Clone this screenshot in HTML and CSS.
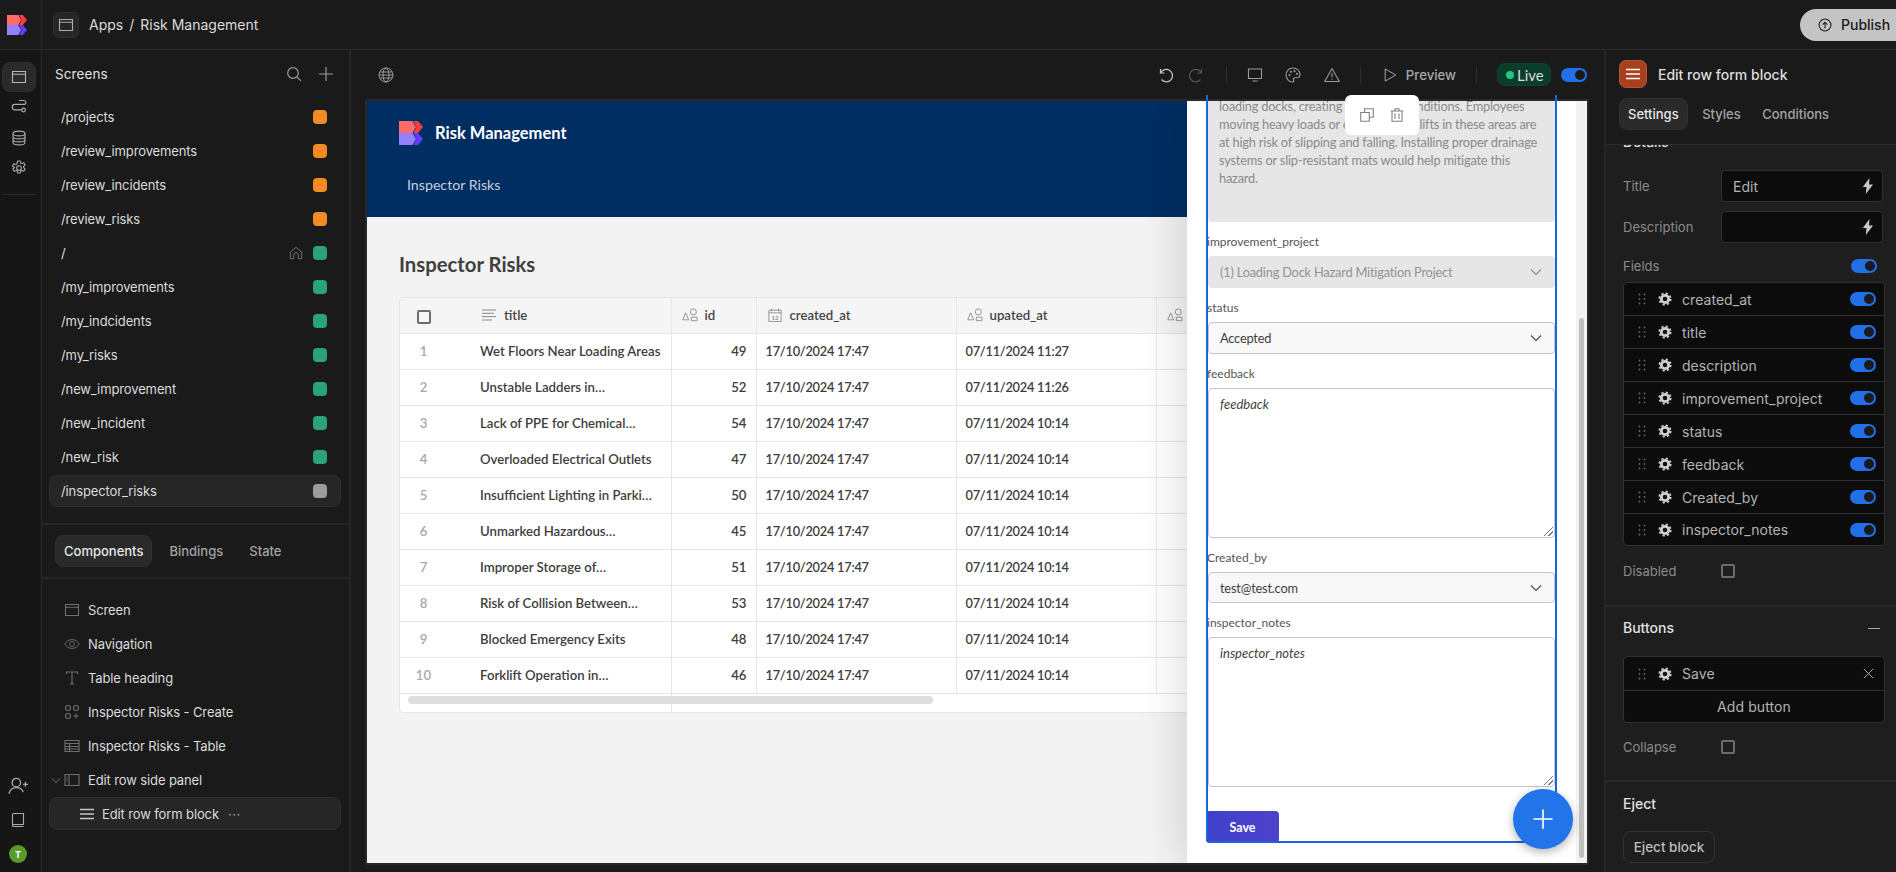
FILE: index.html
```html
<!DOCTYPE html>
<html lang="en">
<head>
<meta charset="utf-8">
<title>Risk Management - Budibase</title>
<link rel="stylesheet" href="styles.css">
</head>
<body>
<svg class="defs" width="0" height="0" aria-hidden="true">
  <defs>
    <symbol id="i-logo" viewBox="0 0 24 24">
      <path fill="#ff6b6b" d="M0 0H13.5L17 6 13.5 12H0Z"/>
      <path fill="#fb3f3f" d="M14.5 0H19L24 6 19 12H14.5L17.5 6Z"/>
      <path fill="#9380ff" d="M0 12H13.5L17 18 13.5 24H0Z"/>
      <path fill="#5f3dff" d="M14.5 12H19L24 18 19 24H14.5L17.5 18Z"/>
    </symbol>
    <symbol id="i-screen" viewBox="0 0 16 16"><path fill="none" stroke="currentColor" stroke-width="1.1" d="M1.5 2.5h13v11h-13zM1.5 5.3h13"/></symbol>
    <symbol id="i-flow" viewBox="0 0 16 16"><path fill="none" stroke="currentColor" stroke-width="1.2" stroke-linecap="round" d="M8.5 1.5H13a1.9 1.9 0 0 1 0 3.8H4a2.6 2.6 0 0 0 0 5.6h6.6"/><circle cx="12.6" cy="11" r="1.8" fill="none" stroke="currentColor" stroke-width="1.2"/></symbol>
    <symbol id="i-db" viewBox="0 0 16 16"><g fill="none" stroke="currentColor" stroke-width="1.1"><ellipse cx="8" cy="3.5" rx="6" ry="2.4"/><path d="M2 3.5v9c0 1.3 2.7 2.4 6 2.4s6-1.1 6-2.4v-9M2 6.5c0 1.3 2.7 2.4 6 2.4s6-1.1 6-2.4M2 9.5c0 1.3 2.7 2.4 6 2.4s6-1.1 6-2.4"/></g></symbol>
    <symbol id="i-cog" viewBox="0 0 16 16"><g fill="none" stroke="currentColor" stroke-width="1.1" stroke-linejoin="round"><circle cx="8" cy="8" r="2.3"/><path d="M6.7 1h2.6l.4 2 1.2.6 1.9-.8 1.3 2.2-1.5 1.3v1.4l1.5 1.3-1.3 2.2-1.9-.8-1.2.6-.4 2H6.700l-.4-2-1.200-.6-1.900.8-1.300-2.200 1.500-1.300V7.300L1.400 6l1.300-2.200 1.900.8 1.200-.6z"/></g></symbol>
    <symbol id="i-search" viewBox="0 0 16 16"><g fill="none" stroke="currentColor" stroke-width="1.2"><circle cx="7" cy="7" r="5.300"/><path d="M11 11l3.800 3.800"/></g></symbol>
    <symbol id="i-plus" viewBox="0 0 16 16"><path fill="none" stroke="currentColor" stroke-width="1.2" d="M8 1v14M1 8h14"/></symbol>
    <symbol id="i-home" viewBox="0 0 16 16"><path fill="none" stroke="currentColor" stroke-width="1.1" stroke-linejoin="round" d="M1.500 7L8 1.500 14.500 7v7.500h-4V10a2.500 2.500 0 0 0-5 0v4.500h-4z"/></symbol>
    <symbol id="i-user" viewBox="0 0 18 16"><g fill="none" stroke="currentColor" stroke-width="1.2" stroke-linecap="round"><circle cx="7.500" cy="5" r="3.800"/><path d="M1 14.500c.8-3 3.300-5 6.500-5s5.200 1.500 6 3.500M14 6.500h3.500M15.700 4.800v3.500"/></g></symbol>
    <symbol id="i-book" viewBox="0 0 16 16"><path fill="none" stroke="currentColor" stroke-width="1.1" d="M2.500 12.500V2.500a1 1 0 0 1 1-1h10v11h-10a1 1 0 0 0-1 1 1 1 0 0 0 1 1h10"/></symbol>
    <symbol id="i-eye" viewBox="0 0 18 12"><g fill="none" stroke="currentColor" stroke-width="1"><path d="M.8 6C3 2.700 5.800 1 9 1s6 1.700 8.200 5C15 9.300 12.200 11 9 11S3 9.300.800 6z"/><circle cx="9" cy="6" r="2.800"/></g></symbol>
    <symbol id="i-text" viewBox="0 0 16 16"><path fill="none" stroke="currentColor" stroke-width="1.1" d="M2.500 4V2h11v2M8 2v12M6 14h4"/></symbol>
    <symbol id="i-form" viewBox="0 0 16 16"><g fill="none" stroke="currentColor" stroke-width="1.100"><circle cx="4" cy="4" r="2.500"/><circle cx="12" cy="4" r="2.500"/><circle cx="4" cy="12" r="2.500"/><path d="M12 9.500v5M9.500 12h5"/></g></symbol>
    <symbol id="i-table" viewBox="0 0 16 16"><path fill="none" stroke="currentColor" stroke-width="1.100" d="M1 2.500h14v11H1zM1 5.500h14M1 8.500h14M1 11h14M5.500 5.500v8"/></symbol>
    <symbol id="i-side" viewBox="0 0 16 16"><path fill="none" stroke="currentColor" stroke-width="1.100" d="M1 2.500h14v11H1zM5 2.500v11M2.500 5h1M2.500 7h1M2.500 9h1"/></symbol>
    <symbol id="i-menu" viewBox="0 0 14 12"><path fill="none" stroke="currentColor" stroke-width="1.300" d="M0 1.500h14M0 6h14M0 10.500h14"/></symbol>
    <symbol id="i-chev" viewBox="0 0 12 8"><path fill="none" stroke="currentColor" stroke-width="1.100" d="M1 1.500l5 5 5-5"/></symbol>
    <symbol id="i-globe" viewBox="0 0 16 16"><g fill="none" stroke="currentColor" stroke-width="1"><circle cx="8" cy="8" r="7"/><ellipse cx="8" cy="8" rx="3" ry="7"/><path d="M1 8h14M1.800 5h12.400M1.800 11h12.400"/></g></symbol>
    <symbol id="i-undo" viewBox="0 0 16 16"><path fill="none" stroke="currentColor" stroke-width="1.200" d="M2.500 2v4h4M2.700 6A6.200 6.200 0 1 1 3.500 12.500"/></symbol>
    <symbol id="i-redo" viewBox="0 0 16 16"><path fill="none" stroke="currentColor" stroke-width="1.200" d="M13.500 2v4h-4M13.300 6A6.200 6.200 0 1 0 12.500 12.500"/></symbol>
    <symbol id="i-desktop" viewBox="0 0 16 16"><path fill="none" stroke="currentColor" stroke-width="1.100" d="M1.500 2h13v9.500h-13zM5.500 14h5"/></symbol>
    <symbol id="i-palette" viewBox="0 0 16 16"><g fill="none" stroke="currentColor" stroke-width="1.100"><path d="M8 1C3.800 1 1 4.200 1 8s3 7 6.300 7c1.300 0 1.800-1 1.300-2-.6-1.200.1-2.300 1.500-2.300h2.200C14 10.700 15 9.200 15 7.500 15 3.800 12 1 8 1z"/></g><g fill="currentColor"><circle cx="4.500" cy="8" r="1.100"/><circle cx="6" cy="4.800" r="1.100"/><circle cx="9.500" cy="4.200" r="1.100"/><circle cx="12" cy="6.800" r="1.100"/></g></symbol>
    <symbol id="i-warn" viewBox="0 0 16 16"><path fill="none" stroke="currentColor" stroke-width="1.100" stroke-linejoin="round" d="M8 1.500L15.300 14.500H.7zM8 6v4.500M8 11.700v1"/></symbol>
    <symbol id="i-play" viewBox="0 0 16 16"><path fill="none" stroke="currentColor" stroke-width="1.100" stroke-linejoin="round" d="M2.500 1v14L14.500 8z"/></symbol>
    <symbol id="i-upload" viewBox="0 0 16 16"><g fill="none" stroke="currentColor" stroke-width="1.200"><circle cx="8" cy="8" r="6.800"/><path d="M8 12V5M5.300 7.500L8 4.800l2.700 2.700"/></g></symbol>
    <symbol id="i-bolt" viewBox="0 0 12 16"><path fill="currentColor" d="M7.500 0L.800 9h3.700L3.800 16 11 6.500H7z"/></symbol>
    <symbol id="i-gear" viewBox="0 0 16 16"><g fill="none" stroke="currentColor"><circle cx="8" cy="8" r="4.200" stroke-width="3.200"/><circle cx="8" cy="8" r="6.500" stroke-width="2" stroke-dasharray="2.550 2.555"/></g></symbol>
    <symbol id="i-drag" viewBox="0 0 8 12"><g fill="currentColor"><circle cx="1.500" cy="1.500" r=".9"/><circle cx="6.500" cy="1.500" r=".9"/><circle cx="1.500" cy="6" r=".9"/><circle cx="6.500" cy="6" r=".9"/><circle cx="1.500" cy="10.500" r=".9"/><circle cx="6.500" cy="10.500" r=".9"/></g></symbol>
    <symbol id="i-close" viewBox="0 0 12 12"><path fill="none" stroke="currentColor" stroke-width="1" d="M1 1l10 10M11 1L1 11"/></symbol>
    <symbol id="i-copy" viewBox="0 0 14 14"><path fill="none" stroke="currentColor" stroke-width="1.100" d="M.7 4.500h8.600v8.800H.7zM4.500 4.500V.7h8.800v8.600H9.300"/></symbol>
    <symbol id="i-trash" viewBox="0 0 14 14"><path fill="none" stroke="currentColor" stroke-width="1.100" d="M2 3v10.300h10V3M.7 3h12.600M5 3V.8h4V3M5 5.500v5.500M9 5.500v5.500"/></symbol>
    <symbol id="i-lines" viewBox="0 0 16 12"><path fill="none" stroke="currentColor" stroke-width="1" d="M1 1h14M1 4.300h12M1 7.600h14M1 11h10"/></symbol>
    <symbol id="i-shapes" viewBox="0 0 18 16"><g fill="none" stroke="currentColor" stroke-width="1"><path d="M4 5.500L7.500 13.500H.7zM10.500 10.500h6.500v4h-6.500z"/><circle cx="12.800" cy="4.500" r="3.500"/></g></symbol>
    <symbol id="i-cal" viewBox="0 0 16 16"><g fill="none" stroke="currentColor" stroke-width="1"><path d="M1 2.500h14v13H1zM1 5.500h14M4 .7v3M12 .7v3"/></g><text x="8" y="13.300" font-size="7" text-anchor="middle" fill="currentColor">12</text></symbol>
  </defs>
</svg>

<div class="app">
  <header class="topbar">
    <div class="brand-cell"><svg class="logo"><use href="#i-logo"/></svg></div>
    <div class="crumbs">
      <span class="crumb-icon"><svg class="ic-15"><use href="#i-screen"/></svg></span>
      <span class="crumb-text">Apps</span><span class="crumb-text crumb-sep">/</span><span class="crumb-text">Risk Management</span>
    </div>
    <button class="publish"><svg class="ic-14"><use href="#i-upload"/></svg>Publish</button>
  </header>

  <div class="workspace">
    <nav class="rail">
      <div class="rail-top">
        <span class="rail-btn active"><svg class="ic-15"><use href="#i-screen"/></svg></span>
        <span class="rail-btn"><svg class="ic-15"><use href="#i-flow"/></svg></span>
        <span class="rail-btn"><svg class="ic-15"><use href="#i-db"/></svg></span>
        <span class="rail-btn"><svg class="ic-15"><use href="#i-cog"/></svg></span>
        <span class="rail-rule"></span>
      </div>
      <div class="rail-bottom">
        <span class="rail-btn"><svg class="ic-18"><use href="#i-user"/></svg></span>
        <span class="rail-btn"><svg class="ic-15"><use href="#i-book"/></svg></span>
        <span class="avatar">T</span>
      </div>
    </nav>

    <aside class="left">
      <section class="screens">
        <div class="screens-head">
          <span class="screens-title">Screens</span>
          <span class="head-icons"><svg class="ic-15"><use href="#i-search"/></svg><svg class="ic-15"><use href="#i-plus"/></svg></span>
        </div>
        <ul class="screen-list">
          <li class="screen-row"><span class="grow">/projects</span><i class="dot orange"></i></li>
          <li class="screen-row"><span class="grow">/review_improvements</span><i class="dot orange"></i></li>
          <li class="screen-row"><span class="grow">/review_incidents</span><i class="dot orange"></i></li>
          <li class="screen-row"><span class="grow">/review_risks</span><i class="dot orange"></i></li>
          <li class="screen-row"><span class="grow">/</span><svg class="ic-14 home"><use href="#i-home"/></svg><i class="dot green"></i></li>
          <li class="screen-row"><span class="grow">/my_improvements</span><i class="dot green"></i></li>
          <li class="screen-row"><span class="grow">/my_indcidents</span><i class="dot green"></i></li>
          <li class="screen-row"><span class="grow">/my_risks</span><i class="dot green"></i></li>
          <li class="screen-row"><span class="grow">/new_improvement</span><i class="dot green"></i></li>
          <li class="screen-row"><span class="grow">/new_incident</span><i class="dot green"></i></li>
          <li class="screen-row"><span class="grow">/new_risk</span><i class="dot green"></i></li>
          <li class="screen-row selected"><span class="grow">/inspector_risks</span><i class="dot grey"></i></li>
        </ul>
      </section>
      <div class="left-tabs">
        <span class="tab active">Components</span><span class="tab">Bindings</span><span class="tab">State</span>
      </div>
      <ul class="tree">
        <li class="tree-row"><svg class="tree-ic"><use href="#i-screen"/></svg>Screen</li>
        <li class="tree-row"><svg class="tree-ic"><use href="#i-eye"/></svg>Navigation</li>
        <li class="tree-row"><svg class="tree-ic"><use href="#i-text"/></svg>Table heading</li>
        <li class="tree-row"><svg class="tree-ic"><use href="#i-form"/></svg>Inspector Risks - Create</li>
        <li class="tree-row"><svg class="tree-ic"><use href="#i-table"/></svg>Inspector Risks - Table</li>
        <li class="tree-row"><svg class="tree-chev"><use href="#i-chev"/></svg><svg class="tree-ic"><use href="#i-side"/></svg>Edit row side panel</li>
        <li class="tree-row selected nested"><svg class="tree-menu"><use href="#i-menu"/></svg>Edit row form block<span class="more">···</span></li>
      </ul>
    </aside>

    <main class="canvas">
      <div class="canvas-bar">
        <svg class="ic-15 bar-ic"><use href="#i-globe"/></svg>
        <div class="bar-right">
          <svg class="ic-15 bar-ic bright"><use href="#i-undo"/></svg>
          <svg class="ic-15 bar-ic dim"><use href="#i-redo"/></svg>
          <span class="bar-rule after-redo"></span>
          <svg class="ic-15 bar-ic"><use href="#i-desktop"/></svg>
          <svg class="ic-15 bar-ic palette"><use href="#i-palette"/></svg>
          <svg class="ic-15 bar-ic warn"><use href="#i-warn"/></svg>
          <span class="bar-rule"></span>
          <span class="preview-btn"><svg class="ic-14"><use href="#i-play"/></svg>Preview</span>
          <span class="bar-rule"></span>
          <span class="live"><i class="live-dot"></i>Live</span>
          <span class="toggle"></span>
        </div>
      </div>

      <div class="stage">
        <div class="site-head">
          <div class="site-brand"><svg class="site-logo"><use href="#i-logo"/></svg><span class="site-name">Risk Management</span></div>
          <div class="site-nav">Inspector Risks</div>
        </div>
        <div class="site-body">
          <h1 class="site-title">Inspector Risks</h1>
          <div class="grid-wrap">
            <table class="grid">
              <colgroup><col class="c-num"><col class="c-title"><col class="c-id"><col class="c-date"><col class="c-date"><col class="c-date"></colgroup>
              <thead>
                <tr>
                  <th class="num"><i class="check light"></i></th>
                  <th><span class="th"><svg class="th-ic"><use href="#i-lines"/></svg>title</span></th>
                  <th><span class="th"><svg class="th-ic"><use href="#i-shapes"/></svg>id</span></th>
                  <th><span class="th"><svg class="th-ic"><use href="#i-cal"/></svg>created_at</span></th>
                  <th><span class="th"><svg class="th-ic"><use href="#i-shapes"/></svg>upated_at</span></th>
                  <th><span class="th"><svg class="th-ic"><use href="#i-shapes"/></svg></span></th>
                </tr>
              </thead>
              <tbody>
                <tr><td class="num">1</td><td>Wet Floors Near Loading Areas</td><td class="end">49</td><td class="date">17/10/2024 17:47</td><td class="date">07/11/2024 11:27</td><td></td></tr>
                <tr><td class="num">2</td><td>Unstable Ladders in…</td><td class="end">52</td><td class="date">17/10/2024 17:47</td><td class="date">07/11/2024 11:26</td><td></td></tr>
                <tr><td class="num">3</td><td>Lack of PPE for Chemical…</td><td class="end">54</td><td class="date">17/10/2024 17:47</td><td class="date">07/11/2024 10:14</td><td></td></tr>
                <tr><td class="num">4</td><td>Overloaded Electrical Outlets</td><td class="end">47</td><td class="date">17/10/2024 17:47</td><td class="date">07/11/2024 10:14</td><td></td></tr>
                <tr><td class="num">5</td><td>Insufficient Lighting in Parki…</td><td class="end">50</td><td class="date">17/10/2024 17:47</td><td class="date">07/11/2024 10:14</td><td></td></tr>
                <tr><td class="num">6</td><td>Unmarked Hazardous…</td><td class="end">45</td><td class="date">17/10/2024 17:47</td><td class="date">07/11/2024 10:14</td><td></td></tr>
                <tr><td class="num">7</td><td>Improper Storage of…</td><td class="end">51</td><td class="date">17/10/2024 17:47</td><td class="date">07/11/2024 10:14</td><td></td></tr>
                <tr><td class="num">8</td><td>Risk of Collision Between…</td><td class="end">53</td><td class="date">17/10/2024 17:47</td><td class="date">07/11/2024 10:14</td><td></td></tr>
                <tr><td class="num">9</td><td>Blocked Emergency Exits</td><td class="end">48</td><td class="date">17/10/2024 17:47</td><td class="date">07/11/2024 10:14</td><td></td></tr>
                <tr><td class="num">10</td><td>Forklift Operation in…</td><td class="end">46</td><td class="date">17/10/2024 17:47</td><td class="date">07/11/2024 10:14</td><td></td></tr>
                <tr class="filler"><td class="num"></td><td class="line"></td><td></td><td></td><td></td><td></td></tr>
              </tbody>
            </table>
            <span class="h-scroll"></span>
          </div>
        </div>

        <div class="side-panel">
          <form class="edit-form">
            <div class="desc-box">loading docks, creating hazardous conditions. Employees<br>moving heavy loads or operating forklifts in these areas are<br>at high risk of slipping and falling. Installing proper drainage<br>systems or slip-resistant mats would help mitigate this<br>hazard.</div>
            <div class="field"><label>improvement_project</label><div class="select disabled">(1) Loading Dock Hazard Mitigation Project<svg class="sel-chev"><use href="#i-chev"/></svg></div></div>
            <div class="field"><label>status</label><div class="select">Accepted<svg class="sel-chev"><use href="#i-chev"/></svg></div></div>
            <div class="field"><label>feedback</label><div class="area">feedback<i class="grip"></i></div></div>
            <div class="field"><label>Created_by</label><div class="select slim">test@test.com<svg class="sel-chev"><use href="#i-chev"/></svg></div></div>
            <div class="field"><label>inspector_notes</label><div class="area">inspector_notes<i class="grip"></i></div></div>
            <div class="save-row"><span class="save">Save</span></div>
          </form>
          <div class="v-track"><span class="v-thumb"></span></div>
        </div>
      </div>

      <div class="selection"></div>
      <div class="float-tools"><svg class="ic-14"><use href="#i-copy"/></svg><svg class="ic-14"><use href="#i-trash"/></svg></div>
      <button class="fab"><svg class="fab-ic"><use href="#i-plus"/></svg></button>
    </main>

    <aside class="right">
      <div class="right-head">
        <div class="right-title"><span class="block-badge"><svg class="badge-ic"><use href="#i-menu"/></svg></span>Edit row form block</div>
        <div class="right-tabs"><span class="tab active">Settings</span><span class="tab">Styles</span><span class="tab">Conditions</span></div>
      </div>
      <div class="right-scroll">
        <section class="sec details">
          <h2 class="sec-title details-title">Details</h2>
          <div class="prop"><span class="prop-label">Title</span><span class="input">Edit<svg class="bolt"><use href="#i-bolt"/></svg></span></div>
          <div class="prop"><span class="prop-label">Description</span><span class="input"><svg class="bolt"><use href="#i-bolt"/></svg></span></div>
          <div class="fields-head"><span class="prop-label">Fields</span><span class="toggle"></span></div>
          <ul class="item-list">
            <li class="item"><svg class="drag"><use href="#i-drag"/></svg><svg class="gear"><use href="#i-gear"/></svg><span class="grow">created_at</span><span class="toggle"></span></li>
            <li class="item"><svg class="drag"><use href="#i-drag"/></svg><svg class="gear"><use href="#i-gear"/></svg><span class="grow">title</span><span class="toggle"></span></li>
            <li class="item"><svg class="drag"><use href="#i-drag"/></svg><svg class="gear"><use href="#i-gear"/></svg><span class="grow">description</span><span class="toggle"></span></li>
            <li class="item"><svg class="drag"><use href="#i-drag"/></svg><svg class="gear"><use href="#i-gear"/></svg><span class="grow">improvement_project</span><span class="toggle"></span></li>
            <li class="item"><svg class="drag"><use href="#i-drag"/></svg><svg class="gear"><use href="#i-gear"/></svg><span class="grow">status</span><span class="toggle"></span></li>
            <li class="item"><svg class="drag"><use href="#i-drag"/></svg><svg class="gear"><use href="#i-gear"/></svg><span class="grow">feedback</span><span class="toggle"></span></li>
            <li class="item"><svg class="drag"><use href="#i-drag"/></svg><svg class="gear"><use href="#i-gear"/></svg><span class="grow">Created_by</span><span class="toggle"></span></li>
            <li class="item"><svg class="drag"><use href="#i-drag"/></svg><svg class="gear"><use href="#i-gear"/></svg><span class="grow">inspector_notes</span><span class="toggle"></span></li>
          </ul>
          <div class="check-row"><span class="prop-label">Disabled</span><i class="check"></i></div>
        </section>
        <section class="sec buttons">
          <div class="sec-head"><h2 class="sec-title">Buttons</h2><span class="minus"></span></div>
          <ul class="item-list btn-list">
            <li class="item save-item"><svg class="drag"><use href="#i-drag"/></svg><svg class="gear"><use href="#i-gear"/></svg><span class="grow">Save</span><svg class="x"><use href="#i-close"/></svg></li>
            <li class="add-btn">Add button</li>
          </ul>
          <div class="check-row"><span class="prop-label">Collapse</span><i class="check"></i></div>
        </section>
        <section class="sec eject">
          <h2 class="sec-title">Eject</h2>
          <span class="eject-btn">Eject block</span>
        </section>
      </div>
    </aside>
  </div>
</div>
</body>
</html>
```

FILE: styles.css
```css
* { box-sizing: border-box; }
html, body { margin: 0; height: 100%; }
body {
  width: 1896px; height: 872px; overflow: hidden;
  background: #1a1a1a; color: #e0e0e0;
  font-family: Inter, "Liberation Sans", sans-serif; font-size: 14px;
}
ul { list-style: none; margin: 0; padding: 0; }
h1, h2 { margin: 0; font-weight: inherit; font-size: inherit; }
button { font: inherit; border: 0; padding: 0; }
.defs { position: absolute; }
svg { display: block; flex: none; }
.grow { flex: 1; min-width: 0; }
.ic-14 { width: 14px; height: 14px; }
.ic-15 { width: 16px; height: 16px; }
.ic-18 { width: 20px; height: 18px; }

.app { display: flex; flex-direction: column; height: 872px; }

/* top bar */
.topbar { height: 50px; flex: none; display: flex; align-items: center; border-bottom: 1px solid #2a2a2a; }
.brand-cell { width: 42px; height: 100%; display: flex; align-items: center; padding-left: 7px; border-right: 1px solid #2a2a2a; }
.logo { width: 20px; height: 20px; }
.crumbs { display: flex; align-items: center; margin-left: 11px; flex: 1; }
.crumb-icon { width: 26px; height: 26px; display: flex; align-items: center; justify-content: center; background: #262626; border: 1px solid #2e2e2e; border-radius: 6px; color: #aaa; margin-right: 10px; }
.crumb-text { font-size: 14px; color: #dcdcdc; }
.crumb-sep { margin: 0 6px; }
.publish { width: 96px; height: 32px; margin-right: 0; display: flex; align-items: center; gap: 9px; padding-left: 18px; background: #c4c4c4; color: #1a1a1a; border-radius: 16px 0 0 16px; font-weight: 500; font-size: 14px; }

.workspace { flex: 1; display: flex; min-height: 0; }

/* rail */
.rail { width: 42px; flex: none; border-right: 1px solid #2a2a2a; display: flex; flex-direction: column; justify-content: space-between; background: #161616; padding: 12px 0 0; }
.rail-top { display: flex; flex-direction: column; align-items: center; gap: .3px; width: 36px; margin-left: 1px; }
.rail-btn { width: 34px; height: 30px; display: flex; align-items: center; justify-content: center; color: #aaa; }
.rail-btn.active { background: #2a2a2a; border: 1px solid #2f2f2f; border-radius: 8px; color: #b8b8b8; }
.rail-rule { width: 34px; height: 1px; background: #2a2a2a; margin-top: 11px; }
.rail-bottom { display: flex; flex-direction: column; align-items: center; width: 36px; gap: 4px; padding-bottom: 9px; }
.avatar { width: 18px; height: 18px; border-radius: 50%; background: #5b9a2c; color: #fff; font-size: 9px; font-weight: 700; display: flex; align-items: center; justify-content: center; margin-top: 6px; }

/* left panel */
.left { width: 309px; flex: none; border-right: 2px solid #262626; display: flex; flex-direction: column; }
.screens { border-bottom: 2px solid #262626; padding-bottom: 15px; height: 475px; flex: none; }
.screens-head { height: 50px; display: flex; align-items: center; justify-content: space-between; padding: 0 15px 2px 13px; }
.screens-title { font-size: 13.5px; color: #e0e0e0; letter-spacing: .1px; }
.head-icons { display: flex; gap: 16px; color: #9a9a9a; }
.screen-list { padding: 0 8px 0 7px; }
.screen-row { height: 34px; display: flex; align-items: center; padding: 0 14px 0 12px; font-size: 13px; letter-spacing: -.12px; color: #dcdcdc; border-radius: 8px; }
.screen-row.selected { height: 32px; margin-top: 1px; background: #262626; border: 1px solid #2e2e2e; padding: 0 13px 0 11px; }
.dot { width: 14px; height: 14px; border-radius: 4px; display: block; }
.dot.orange { background: #f28c22; }
.dot.green { background: #2ba37a; }
.dot.grey { background: #9b9b9b; }
.home { color: #777; margin-right: 10px; }
.left-tabs { height: 54px; flex: none; display: flex; align-items: center; padding-left: 13px; border-bottom: 2px solid #262626; gap: 1px; }
.tab { height: 32px; display: inline-flex; align-items: center; padding: 0 8px; font-size: 13px; font-weight: 500; color: #a3a3a3; border-radius: 8px; border: 1px solid transparent; margin-right: 7px; }
.tab.active { background: #2a2a2a; border-color: #303030; color: #e6e6e6; }
.tree { padding: 14px 8px 0 7px; }
.tree-row { height: 34px; display: flex; align-items: center; padding-left: 15px; font-size: 13px; letter-spacing: -.12px; color: #dcdcdc; position: relative; }
.tree-ic { width: 16px; height: 16px; color: #707070; margin-right: 8px; }
.tree-chev { position: absolute; left: 2px; top: 14px; width: 10px; height: 7px; color: #777; }
.tree-row.selected { height: 33px; background: #262626; border: 1px solid #2e2e2e; border-radius: 8px; padding-left: 30px; }
.tree-menu { width: 14px; height: 12px; color: #c8c8c8; margin-right: 8px; }
.more { margin-left: 9px; color: #aaa; letter-spacing: .5px; }

/* canvas */
.canvas { flex: 1; min-width: 0; position: relative; display: flex; flex-direction: column; padding: 0 15px 7px 14px; }
.canvas-bar { height: 49px; flex: none; display: flex; align-items: center; justify-content: space-between; padding-left: 13px; }
.bar-ic { color: #999; }
.bar-ic.bright { color: #c4c4c4; }
.bar-ic.dim { color: #555; margin-left: -6px; }
.bar-right { display: flex; align-items: center; gap: 20px; margin-right: 2px; }
.bar-right .palette { margin-left: 2px; }
.bar-right .warn { margin-left: 3px; }
.bar-right .after-redo { margin-left: 2px; }
.bar-rule { width: 1px; height: 18px; background: #2c2c2c; }
.preview-btn { display: flex; align-items: center; gap: 9px; margin-left: 2px; color: #a8a8a8; font-size: 13.2px; font-weight: 500; }
.live { height: 23px; width: 54px; padding-left: 8px; display: flex; align-items: center; gap: 3px; background: #0a3d2b; border: 1px solid #0e4431; border-radius: 8px; color: #dcdcdc; font-family: Lato, sans-serif; font-size: 15px; }
.live-dot { width: 8px; height: 8px; border-radius: 50%; background: #1fc77e; display: block; }
.toggle { width: 26px; height: 14px; flex: none; border-radius: 7px; background: #2270e8; position: relative; display: block; }
.bar-right .toggle { margin-left: -10px; }
.toggle::after { content: ""; position: absolute; right: 2px; top: 2px; width: 10px; height: 10px; border-radius: 50%; background: #1a1a1a; }

.stage { flex: 1; min-height: 0; border: 2px solid #292929; position: relative; overflow: hidden; background: #f3f3f3; color: #3d3d3d; font-family: Lato, "Noto Sans", sans-serif; display: flex; flex-direction: column; }
.site-head { height: 116px; flex: none; background: #002e63; padding: 20px 0 0 32px; }
.site-brand { display: flex; align-items: center; gap: 12px; color: #fff; font-size: 16.5px; font-weight: 700; height: 24px; }
.site-name { margin-top: -1px; }
.site-logo { width: 24px; height: 24px; }
.site-nav { margin: 29px 0 0 8px; color: #c6d0dc; font-size: 14.2px; height: 22px; line-height: 22px; }
.site-body { flex: 1; padding: 0 32px; }
.site-title { font-size: 20.3px; font-weight: 700; color: #404040; height: 80px; line-height: 95px; }
.grid-wrap { position: relative; height: 416px; background: #fff; border: 1px solid #e6e6e6; border-radius: 4px; overflow: hidden; }
.grid { width: 956px; table-layout: fixed; border-collapse: collapse; font-size: 13.2px; font-weight: 600; }
.c-num { width: 71px; }
.c-title { width: 200px; }
.c-id { width: 85px; }
.c-date { width: 200px; }
.grid th { height: 35px; background: #f5f5f5; text-align: left; padding: 0 10px; border-right: 1px solid #e6e6e6; border-bottom: 1px solid #e6e6e6; color: #444; font-weight: 600; }
.grid td { height: 36px; padding: 0 9px; border-right: 1px solid #e6e6e6; border-bottom: 1px solid #e6e6e6; white-space: nowrap; overflow: hidden; color: #3d3d3d; }
.grid .num { text-align: center; padding: 0 24px 0 0; color: #a8a8a8; border-right: 0; }
.grid .end { text-align: right; }
.grid .date { font-size: 12.8px; letter-spacing: -.25px; }
.grid .filler td { height: 21px; border: 0; }
.grid .filler .line { border-right: 1px solid #e6e6e6; }
.th { display: flex; align-items: center; gap: 7px; }
.th-ic { width: 16px; height: 14px; color: #8a8a8a; }
.h-scroll { position: absolute; left: 8px; top: 398px; width: 525px; height: 8px; border-radius: 4px; background: #dedede; }
.check { display: block; width: 14px; height: 14px; border: 2px solid #6c6c6c; border-radius: 2px; }
.check.light { display: inline-block; vertical-align: middle; }

/* side panel */
.side-panel { position: absolute; top: 0; right: 0; bottom: 0; width: 400px; background: #fff; box-shadow: -6px 0 40px rgba(0,0,0,.14); display: flex; flex-direction: column; justify-content: flex-end; overflow: hidden; padding: 0 32px 20px 21px; }
.edit-form { display: flex; flex-direction: column; gap: 12px; flex: none; }
.desc-box { background: #e6e6e6; color: #8a8a8a; font-size: 12.8px; letter-spacing: -.2px; line-height: 18px; padding: 0 11px 35px; height: 125px; border-radius: 4px; white-space: nowrap; }
.field { display: flex; flex-direction: column; gap: 4px; }
.field label { font-size: 12px; line-height: 16px; height: 18px; color: #555; margin-left: -1px; }
.select { height: 32px; display: flex; align-items: center; justify-content: space-between; padding: 0 12px 0 11px; background: #f8f8f8; border: 1px solid #c4c4c4; border-radius: 4px; font-size: 12.8px; letter-spacing: -.2px; color: #3f3f3f; }
.select.slim { height: 31px; }
.select.disabled { background: #e6e6e6; border-color: #e6e6e6; color: #929292; }
.sel-chev { width: 12px; height: 8px; color: #444; }
.disabled .sel-chev { color: #8a8a8a; }
.area { height: 150px; position: relative; border: 1px solid #c4c4c4; border-radius: 4px; padding: 6px 11px; font-size: 13px; line-height: 18px; font-style: italic; color: #3f3f3f; background: #fff; }
.grip { position: absolute; right: 1px; bottom: 1px; width: 9px; height: 9px; background: linear-gradient(135deg, transparent 45%, #777 45%, #777 55%, transparent 55%, transparent 68%, #777 68%, #777 78%, transparent 78%); }
.save-row { display: flex; padding-top: 12px; margin-left: -2px; }
.save { width: 73px; height: 32px; display: flex; align-items: center; justify-content: center; background: linear-gradient(90deg, #3f41c9, #4f41cc); color: #fff; font-size: 12.5px; font-weight: 700; border-radius: 4px; }
.v-track { position: absolute; top: 0; right: 0; bottom: 0; width: 11px; background: #f3f3f3; }
.v-thumb { position: absolute; top: 217px; bottom: 5px; left: 3px; width: 5px; background: #c0c0c0; border-radius: 3px; }

.selection { position: absolute; left: 855px; top: 45px; width: 351px; height: 748px; border: 2px solid #1b64e0; border-top-width: 0; border-radius: 0 0 4px 4px; pointer-events: none; }
.float-tools { position: absolute; left: 994px; top: 45px; width: 74px; height: 40px; background: #fff; border-radius: 6px; display: flex; align-items: center; justify-content: center; gap: 16px; color: #808080; }
.fab { position: absolute; left: 1162px; top: 739px; width: 60px; height: 60px; border-radius: 50%; background: #2274e8; color: #fff; display: flex; align-items: center; justify-content: center; box-shadow: 0 3px 10px rgba(0,0,0,.3); }
.fab-ic { width: 22px; height: 22px; }

/* right panel */
.right { width: 292px; flex: none; border-left: 2px solid #262626; background: #1e1e1e; display: flex; flex-direction: column; min-height: 0; }
.right-head { height: 95px; flex: none; background: #1a1a1a; border-bottom: 1px solid #2c2c2c; padding: 10px 0 0 13px; }
.right-title { display: flex; align-items: center; gap: 11px; height: 28px; color: #dedede; font-size: 14px; font-weight: 500; }
.block-badge { width: 28px; height: 28px; border-radius: 7px; background: #a8401f; border: 1px solid #b8532f; display: flex; align-items: center; justify-content: center; color: #fff; }
.badge-ic { width: 14px; height: 12px; }
.right-tabs { display: flex; margin-top: 10px; }
.right-tabs .tab { margin-right: 0; padding: 0 6px; }
.right-tabs .tab + .tab { margin-left: 7.5px; }
.right-tabs .tab.active { padding: 0 8px; }
.right-scroll { flex: 1; min-height: 0; display: flex; flex-direction: column; justify-content: flex-end; overflow: hidden; }
.sec { flex: none; padding: 0 11px 0 17px; border-bottom: 2px solid #2a2a2a; }
.sec:last-child { border-bottom: 0; }
.sec-title { font-size: 14px; line-height: 20px; font-weight: 500; color: #e2e2e2; }
.details-title { margin-bottom: 18px; }
.details { padding-bottom: 24px; }
.prop { display: grid; grid-template-columns: 98px 162px; align-items: center; margin-bottom: 9px; }
.prop-label { font-size: 13px; color: #8c8c8c; }
.input { height: 32px; display: flex; align-items: center; justify-content: space-between; padding: 0 8px 0 11px; background: #0c0c0c; border: 1px solid #303030; border-radius: 4px; color: #b4b4b4; }
.bolt { width: 12px; height: 16px; color: #c8c8c8; margin-left: auto; }
.fields-head { display: flex; align-items: center; justify-content: space-between; height: 16px; margin: 15px 8px 8px 0; }
.item-list { background: #0c0c0c; border: 1px solid #303030; border-radius: 4px; }
.item { height: 33px; display: flex; align-items: center; padding: 0 8px 0 14px; border-bottom: 1px solid #303030; color: #b4b4b4; letter-spacing: .05px; }
.item:last-child { height: 31px; border-bottom: 0; }
.drag { width: 8px; height: 12px; color: #666; margin-right: 12px; }
.gear { width: 14px; height: 14px; color: #d0d0d0; margin-right: 10px; }
.check-row { display: grid; grid-template-columns: 98px 14px; align-items: center; height: 20px; margin-top: 15px; }
.buttons { padding-top: 11px; padding-bottom: 23px; }
.sec-head { display: flex; align-items: center; justify-content: space-between; margin-bottom: 18px; }
.minus { width: 12px; height: 1px; background: #aaa; margin-right: 5px; }
.save-item.item { height: 34px; border-bottom: 1px solid #303030; }
.x { width: 11px; height: 11px; color: #b8b8b8; margin-right: 2px; }
.add-btn { height: 31px; display: flex; align-items: center; justify-content: center; color: #b4b4b4; letter-spacing: .1px; }
.btn-list + .check-row { margin-top: 14px; }
.eject { padding-top: 12px; padding-bottom: 9px; }
.eject-btn { display: flex; align-items: center; justify-content: center; width: 92px; height: 32px; margin-top: 17px; border: 1px solid #333; border-radius: 8px; color: #bdbdbd; font-weight: 500; font-size: 13.5px; }
```
